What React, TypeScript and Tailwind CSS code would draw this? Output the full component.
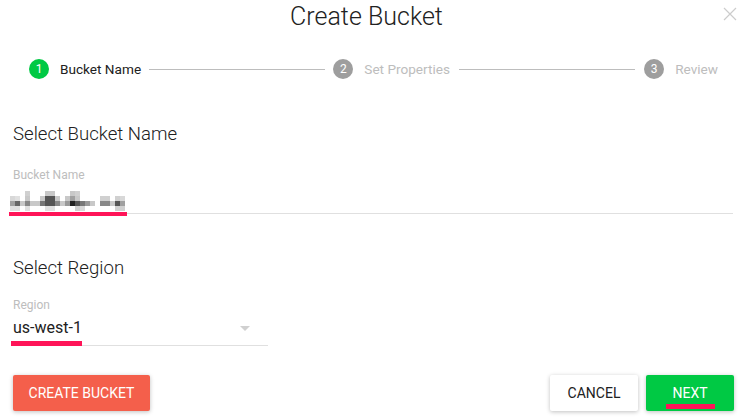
import React from "react";

const px: [number, number, string][] = [
  [25, 0, "#d0d0d0"], [45, 0, "#c8c8c8"], [50, 0, "#c8c8c8"], [70, 0, "#c8c8c8"], [75, 0, "#d0d0d0"],
  [10, 1, "#d8d8d8"], [15, 1, "#e0e0e0"], [25, 1, "#c8c8c8"], [40, 1, "#c8c8c8"], [45, 1, "#555555"], [50, 1, "#555555"], [55, 1, "#c8c8c8"], [65, 1, "#c8c8c8"], [70, 1, "#a0a0a0"], [75, 1, "#c8c8c8"], [100, 1, "#d0d0d0"], [105, 1, "#d0d0d0"], [115, 1, "#d0d0d0"], [120, 1, "#d8d8d8"],
  [10, 2, "#a0a0a0"], [15, 2, "#666666"], [20, 2, "#c8c8c8"], [25, 2, "#888888"], [30, 2, "#c8c8c8"], [35, 2, "#c8c8c8"], [40, 2, "#777777"], [45, 2, "#555555"], [50, 2, "#555555"], [55, 2, "#888888"], [60, 2, "#c8c8c8"], [65, 2, "#999999"], [70, 2, "#222222"], [75, 2, "#555555"], [80, 2, "#777777"], [85, 2, "#999999"], [90, 2, "#c8c8c8"], [100, 2, "#888888"], [105, 2, "#888888"], [110, 2, "#c8c8c8"], [115, 2, "#555555"], [120, 2, "#a0a0a0"],
  [10, 3, "#e0e0e0"], [15, 3, "#e0e0e0"], [25, 3, "#e0e0e0"], [45, 3, "#e0e0e0"], [50, 3, "#e0e0e0"], [75, 3, "#d0d0d0"], [80, 3, "#d8d8d8"], [115, 3, "#d0d0d0"], [120, 3, "#d0d0d0"],
];

function Step({ n, label, active }: { n: number; label: string; active?: boolean }) {
  return (
    <div className="flex items-center shrink-0">
      <div
        className={
          "w-[20px] h-[20px] rounded-full flex items-center justify-center text-white text-[12px] " +
          (active ? "bg-[#00c944]" : "bg-[#9e9e9e]")
        }
      >
        {n}
      </div>
      <span className={"ml-[11px] text-[13.6px] leading-[20px] " + (active ? "text-[#212121]" : "text-[#bdbdbd]")}>
        {label}
      </span>
    </div>
  );
}

export default function App() {
  return (
    <div
      className="relative w-[747px] h-[419px] bg-white overflow-hidden"
      style={{ fontFamily: "Roboto, 'Noto Sans', sans-serif" }}
    >
      <svg className="absolute left-[723px] top-[7px]" width="14" height="14" viewBox="0 0 14 14">
        <path d="M1 1 L13 13 M13 1 L1 13" stroke="#cccccc" strokeWidth="1.2" />
      </svg>

      <div className="pt-[2px] pr-[14px] text-center text-[25px] leading-[30px] font-light text-[#212121]">Create Bucket</div>

      <div className="mt-[27px] flex items-center pl-[29px] pr-[29px]">
        <Step n={1} label="Bucket Name" active />
        <div className="flex-1 h-px bg-[#bdbdbd] mx-[8px]" />
        <Step n={2} label="Set Properties" />
        <div className="flex-1 h-px bg-[#bdbdbd] mx-[9px]" />
        <Step n={3} label="Review" />
      </div>

      <div className="mt-[43px] pl-[13px] text-[18.6px] leading-[24px] font-light text-[#212121]">Select Bucket Name</div>

      <div className="relative ml-[9px] w-[724px] mt-[21px]">
        <div className="pl-[4px] text-[12px] leading-[16px] text-[#bdbdbd]">Bucket Name</div>
        <div className="mt-[8px] h-[20px] relative">
          <svg className="absolute left-[-9px] top-0" width="130" height="20" viewBox="0 0 130 20">
            {px.map(([x, r, c], i) => (
              <rect key={i} x={x} y={r * 5} width="5" height="5" fill={c} />
            ))}
          </svg>
        </div>
        <div className="mt-[2px] h-px bg-[#e0e0e0]" />
        <div className="absolute left-0 top-[45px] w-[118px] h-[4px] bg-[#ff1458]" />
      </div>

      <div className="mt-[42px] pl-[13px] text-[18.6px] leading-[24px] font-light text-[#212121]">Select Region</div>

      <div className="relative ml-[11px] w-[257px] mt-[17px]">
        <div className="pl-[2px] text-[12px] leading-[16px] text-[#bdbdbd]">Region</div>
        <div className="mt-[5px] h-[20px] flex items-center justify-between">
          <span className="pl-[2px] text-[16px] leading-[20px] text-[#212121]">us-west-1</span>
          <svg className="mr-[18px]" width="10" height="5" viewBox="0 0 10 5">
            <path d="M0 0 L10 0 L5 5 Z" fill="#d0d0d0" />
          </svg>
        </div>
        <div className="mt-[7px] h-px bg-[#e0e0e0]" />
        <div className="absolute left-0 top-[44px] w-[71px] h-[5px] bg-[#ff1458]" />
      </div>

      <div className="mt-[29px] flex items-center px-[13px]">
        <button className="w-[137px] h-[36px] rounded-[2px] bg-[#f45f4b] text-white text-[14px] font-normal uppercase shadow-[0_1px_4px_rgba(0,0,0,0.25)]">
          Create Bucket
        </button>
        <div className="flex-1" />
        <button className="w-[88px] h-[36px] rounded-[2px] bg-white text-[#212121] text-[14px] font-normal uppercase shadow-[0_1px_4px_rgba(0,0,0,0.25)]">
          Cancel
        </button>
        <button className="relative ml-[8px] w-[88px] h-[36px] rounded-[2px] bg-[#00c944] text-white text-[14px] font-normal uppercase shadow-[0_1px_4px_rgba(0,0,0,0.25)]">
          Next
          <span className="absolute left-[20px] top-[29px] w-[49px] h-[5px] bg-[#ff1458]" />
        </button>
      </div>
    </div>
  );
}
